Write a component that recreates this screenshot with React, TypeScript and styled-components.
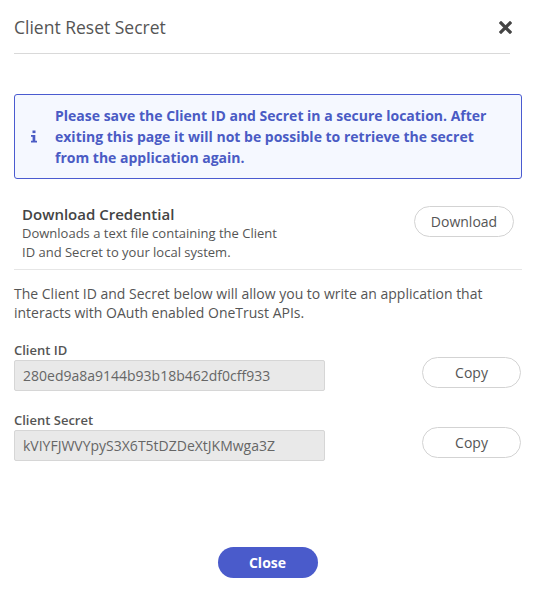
import React from "react";
import styled, { createGlobalStyle } from "styled-components";

const Global = createGlobalStyle`
  html, body { margin: 0; padding: 0; background: #fff; }
  body { font-family: "Open Sans", "Noto Sans", sans-serif; color: #555; }
  * { box-sizing: border-box; }
`;

const Modal = styled.div`
  width: 535px;
  height: 595px;
  padding: 0 13px 0 14px;
  display: flex;
  flex-direction: column;
`;

const Header = styled.div`
  height: 54px;
  margin-right: 12px;
  border-bottom: 1px solid #d9d9d9;
  display: flex;
  align-items: center;
  justify-content: space-between;
`;

const Title = styled.h2`
  margin: 15px 0 0 0;
  font-size: 17.5px;
  font-weight: 500;
  color: #555;
  line-height: 24px;
  align-self: flex-start;
`;

const CloseX = styled.button`
  border: 0;
  background: none;
  padding: 0;
  margin: 3px -3px 0 0;
  width: 14px;
  height: 14px;
  display: flex;
  cursor: pointer;
`;

const InfoBox = styled.div`
  margin-top: 40px;
  border: 1px solid #4a5bd0;
  border-radius: 3px;
  background: #f5f8ff;
  padding: 10px 12px 10px 12px;
  display: flex;
  align-items: center;
  gap: 14px;
`;

const InfoIcon = styled.span`
  width: 14px;
  display: flex;
  justify-content: center;
  flex: none;
`;

const InfoText = styled.p`
  margin: 0;
  font-size: 14px;
  line-height: 21px;
  font-weight: 700;
  color: #4a5bc4;
`;

const DownloadSection = styled.div`
  margin-top: 25px;
  padding: 0 8px 7px 8px;
  border-bottom: 1px solid #e6e6e6;
  display: flex;
  justify-content: space-between;
  align-items: flex-start;
`;

const SectionTitle = styled.div`
  font-size: 15px;
  line-height: 20px;
  font-weight: 600;
  color: #444;
`;

const SectionDesc = styled.div`
  font-size: 13px;
  line-height: 19px;
  color: #555;
  width: 265px;
`;

const PillButton = styled.button<{ $width: number }>`
  width: ${(p) => p.$width}px;
  height: 31px;
  border: 1px solid #d3d3d3;
  border-radius: 16px;
  background: #fff;
  font-family: "Open Sans", "Noto Sans", sans-serif;
  font-size: 14px;
  color: #555;
  cursor: pointer;
  flex: none;
`;

const DownloadButton = styled(PillButton)`
  margin-top: 2px;
`;

const Paragraph = styled.p`
  margin: 14px 0 0 0;
  font-size: 14px;
  line-height: 19px;
  color: #555;
`;

const Field = styled.div<{ $top: number }>`
  margin-top: ${(p) => p.$top}px;
  display: flex;
  flex-direction: column;
`;

const Label = styled.label`
  font-size: 13px;
  line-height: 18px;
  font-weight: 600;
  color: #555;
  margin-bottom: 1px;
`;

const FieldRow = styled.div`
  display: flex;
  align-items: center;
  justify-content: space-between;
  padding-right: 1px;
`;

const ReadOnly = styled.div`
  width: 311px;
  height: 31px;
  background: #e9e9e9;
  border: 1px solid #d6d6d6;
  border-radius: 2px;
  padding: 0 8px;
  display: flex;
  align-items: center;
  font-size: 14px;
  color: #666;
`;

const CopyButton = styled(PillButton)`
  position: relative;
  top: -3px;
`;

const Footer = styled.div`
  margin-top: auto;
  padding-bottom: 17px;
  display: flex;
  justify-content: center;
  padding-right: 1px;
`;

const PrimaryButton = styled.button`
  width: 100px;
  height: 31px;
  border: 0;
  border-radius: 16px;
  background: #4a5bcb;
  color: #fff;
  font-family: "Open Sans", "Noto Sans", sans-serif;
  font-size: 14px;
  font-weight: 700;
  cursor: pointer;
`;

export default function App() {
  return (
    <>
      <Global />
      <Modal>
        <Header>
          <Title>Client Reset Secret</Title>
          <CloseX aria-label="Close">
            <svg width="13" height="13" viewBox="0 0 13 13">
              <path d="M2 2 L11 11 M11 2 L2 11" stroke="#444" strokeWidth="3.2" strokeLinecap="square" />
            </svg>
          </CloseX>
        </Header>

        <InfoBox>
          <InfoIcon>
            <svg width="8" height="13" viewBox="0 0 8 13">
              <rect x="2.5" y="0.5" width="3" height="2.6" fill="#4a5bc4" />
              <path d="M1 5 H5.3 V10.8 H7 V12.6 H1 V10.8 H2.6 V6.8 H1 Z" fill="#4a5bc4" />
            </svg>
          </InfoIcon>
          <InfoText>
            Please save the Client ID and Secret in a secure location. After exiting this page it will not be possible
            to retrieve the secret from the application again.
          </InfoText>
        </InfoBox>

        <DownloadSection>
          <div>
            <SectionTitle>Download Credential</SectionTitle>
            <SectionDesc>Downloads a text file containing the Client ID and Secret to your local system.</SectionDesc>
          </div>
          <DownloadButton $width={100}>Download</DownloadButton>
        </DownloadSection>

        <Paragraph>
          The Client ID and Secret below will allow you to write an application that interacts with OAuth enabled
          OneTrust APIs.
        </Paragraph>

        <Field $top={19}>
          <Label>Client ID</Label>
          <FieldRow>
            <ReadOnly>280ed9a8a9144b93b18b462df0cff933</ReadOnly>
            <CopyButton $width={99}>Copy</CopyButton>
          </FieldRow>
        </Field>

        <Field $top={20}>
          <Label>Client Secret</Label>
          <FieldRow>
            <ReadOnly>kVIYFJWVYpyS3X6T5tDZDeXtJKMwga3Z</ReadOnly>
            <CopyButton $width={99}>Copy</CopyButton>
          </FieldRow>
        </Field>

        <Footer>
          <PrimaryButton>Close</PrimaryButton>
        </Footer>
      </Modal>
    </>
  );
}
